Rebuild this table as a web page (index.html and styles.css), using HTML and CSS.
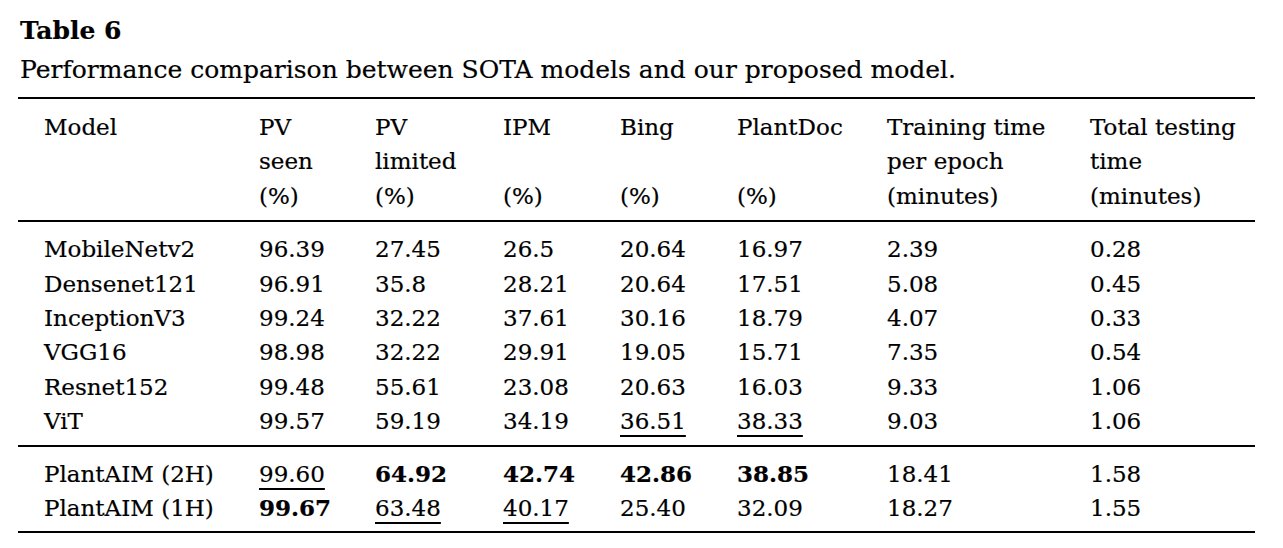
FILE: index.html
```html
<!DOCTYPE html>
<html>
<head>
<meta charset="utf-8">
<link rel="stylesheet" href="styles.css">
</head>
<body>
<div class="page">
  <div class="title">Table 6</div>
  <div class="caption">Performance comparison between SOTA models and our proposed model.</div>
  <table class="tbl">
    <colgroup>
      <col class="c-model"><col class="c-seen"><col class="c-lim"><col class="c-ipm"><col class="c-bing"><col class="c-pd"><col class="c-train"><col class="c-test">
    </colgroup>
    <thead>
      <tr>
        <th>Model</th>
        <th>PV<br>seen<br>(%)</th>
        <th>PV<br>limited<br>(%)</th>
        <th>IPM<br><br>(%)</th>
        <th>Bing<br><br>(%)</th>
        <th>PlantDoc<br><br>(%)</th>
        <th>Training time<br>per epoch<br>(minutes)</th>
        <th>Total testing<br>time<br>(minutes)</th>
      </tr>
    </thead>
    <tbody class="group first">
      <tr><td>MobileNetv2</td><td>96.39</td><td>27.45</td><td>26.5</td><td>20.64</td><td>16.97</td><td>2.39</td><td>0.28</td></tr>
      <tr><td>Densenet121</td><td>96.91</td><td>35.8</td><td>28.21</td><td>20.64</td><td>17.51</td><td>5.08</td><td>0.45</td></tr>
      <tr><td>InceptionV3</td><td>99.24</td><td>32.22</td><td>37.61</td><td>30.16</td><td>18.79</td><td>4.07</td><td>0.33</td></tr>
      <tr><td>VGG16</td><td>98.98</td><td>32.22</td><td>29.91</td><td>19.05</td><td>15.71</td><td>7.35</td><td>0.54</td></tr>
      <tr><td>Resnet152</td><td>99.48</td><td>55.61</td><td>23.08</td><td>20.63</td><td>16.03</td><td>9.33</td><td>1.06</td></tr>
      <tr><td>ViT</td><td>99.57</td><td>59.19</td><td>34.19</td><td><span class="u">36.51</span></td><td><span class="u">38.33</span></td><td>9.03</td><td>1.06</td></tr>
    </tbody>
    <tbody class="group last">
      <tr><td>PlantAIM (2H)</td><td><span class="u">99.60</span></td><td><b>64.92</b></td><td><b>42.74</b></td><td><b>42.86</b></td><td><b>38.85</b></td><td>18.41</td><td>1.58</td></tr>
      <tr><td>PlantAIM (1H)</td><td><b>99.67</b></td><td><span class="u">63.48</span></td><td><span class="u">40.17</span></td><td>25.40</td><td>32.09</td><td>18.27</td><td>1.55</td></tr>
    </tbody>
  </table>
</div>
</body>
</html>
```
FILE: styles.css
```css
html, body {
  margin: 0;
  padding: 0;
  background: #fff;
}
.page {
  padding: 14px 28px 0 18px;
  font-family: "DejaVu Serif", serif;
  color: #000;
  -webkit-text-stroke: 0.2px #000;
}
.title {
  font-weight: bold;
  font-size: 25px;
  line-height: 34px;
  padding-left: 2px;
}
.caption {
  font-size: 25px;
  line-height: 36px;
  padding-left: 2px;
  padding-top: 4px;
  padding-bottom: 9px;
}
.tbl {
  width: 1237px;
  border-collapse: collapse;
  table-layout: fixed;
  font-size: 23px;
  line-height: 34.4px;
}
.c-model { width: 241px; }
.c-seen { width: 116px; }
.c-lim { width: 128px; }
.c-ipm { width: 117px; }
.c-bing { width: 117px; }
.c-pd { width: 150px; }
.c-train { width: 203px; }
.c-test { width: 165px; }
.tbl th, .tbl td {
  text-align: left;
  vertical-align: top;
  padding: 0;
  white-space: nowrap;
}
.tbl th {
  font-weight: normal;
}
.tbl th:first-child, .tbl td:first-child {
  padding-left: 26px;
}
.tbl thead tr {
  border-top: 2px solid #000;
  border-bottom: 2px solid #000;
}
.tbl thead th {
  padding-top: 11px;
  padding-bottom: 7px;
}
.tbl tbody.last {
  border-top: 2px solid #000;
  border-bottom: 2px solid #000;
}
.tbl tbody tr:first-child td {
  padding-top: 10px;
}
.tbl tbody tr:last-child td {
  padding-bottom: 6px;
}
.u {
  text-decoration: underline;
  text-decoration-thickness: 2px;
  text-underline-offset: 6px;
}
b {
  font-weight: bold;
}
```
